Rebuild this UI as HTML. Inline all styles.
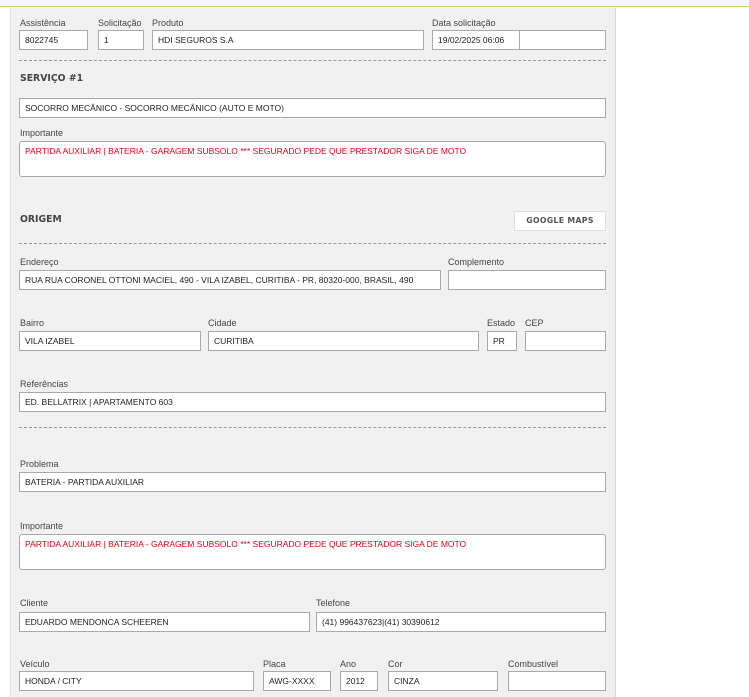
<!DOCTYPE html>
<html><head><meta charset="utf-8"><style>
*{margin:0;padding:0;box-sizing:border-box}
body{width:749px;height:697px;background:#fff;position:relative;overflow:hidden;font-family:"Liberation Sans",sans-serif;font-size:8.5px;color:#333}
.top{position:absolute;left:0;top:0;width:749px;height:7px;background:#f7f7f7;border-bottom:1px solid #c5d36a}
.panel{position:absolute;left:10px;top:8px;width:606px;height:689px;background:#f1f1f1;border-left:1px solid #e2e2e2;border-right:1px solid #d6d6d6}
.l{position:absolute;color:#444;line-height:11px;margin-top:2px;font-size:9px}
.i{position:absolute;height:20px;background:#fff;border:1px solid #a9a9a9;padding-left:5px;line-height:18px;color:#222;white-space:nowrap;overflow:hidden}
.t{position:absolute;background:#fff;border:1px solid #a9a9a9;border-radius:3px;padding:3px 5px;color:#e0001a;line-height:12px}
.d{position:absolute;left:19px;width:587px;border-top:1px dashed #999}
.h{position:absolute;font-family:"DejaVu Sans",sans-serif;font-weight:bold;font-size:9.3px;color:#444}
.btn{position:absolute;left:514px;top:211px;width:92px;height:20px;background:#fff;border:1px solid #e0e0e0;font-family:"DejaVu Sans",sans-serif;font-weight:bold;font-size:7.8px;color:#555;text-align:center;line-height:18px;letter-spacing:.3px}
</style></head><body>
<div class="top"></div>
<div class="panel"></div>

<div class="l" style="left:20px;top:16px">Assistência</div>
<div class="l" style="left:98px;top:16px">Solicitação</div>
<div class="l" style="left:152px;top:16px">Produto</div>
<div class="l" style="left:432px;top:16px">Data solicitação</div>
<div class="i" style="left:19px;top:30px;width:69px">8022745</div>
<div class="i" style="left:98px;top:30px;width:46px">1</div>
<div class="i" style="left:152px;top:30px;width:272px">HDI SEGUROS S.A</div>
<div class="i" style="left:432px;top:30px;width:88px">19/02/2025 06:06</div>
<div class="i" style="left:519px;top:30px;width:87px"></div>
<div class="d" style="top:60px"></div>

<div class="h" style="left:20px;top:73px">SERVIÇO #1</div>
<div class="i" style="left:19px;top:98px;width:587px">SOCORRO MECÂNICO - SOCORRO MECÂNICO (AUTO E MOTO)</div>
<div class="l" style="left:20px;top:126px">Importante</div>
<div class="t" style="left:19px;top:141px;width:587px;height:36px">PARTIDA AUXILIAR | BATERIA - GARAGEM SUBSOLO *** SEGURADO PEDE QUE PRESTADOR SIGA DE MOTO</div>

<div class="h" style="left:20px;top:214px">ORIGEM</div>
<div class="btn">GOOGLE MAPS</div>
<div class="d" style="top:243px"></div>

<div class="l" style="left:20px;top:255px">Endereço</div>
<div class="l" style="left:448px;top:255px">Complemento</div>
<div class="i" style="left:19px;top:270px;width:422px">RUA RUA CORONEL OTTONI MACIEL, 490 - VILA IZABEL, CURITIBA - PR, 80320-000, BRASIL, 490</div>
<div class="i" style="left:448px;top:270px;width:158px"></div>

<div class="l" style="left:20px;top:316px">Bairro</div>
<div class="l" style="left:208px;top:316px">Cidade</div>
<div class="l" style="left:487px;top:316px">Estado</div>
<div class="l" style="left:525px;top:316px">CEP</div>
<div class="i" style="left:19px;top:331px;width:182px">VILA IZABEL</div>
<div class="i" style="left:208px;top:331px;width:271px">CURITIBA</div>
<div class="i" style="left:487px;top:331px;width:30px">PR</div>
<div class="i" style="left:525px;top:331px;width:81px"></div>

<div class="l" style="left:20px;top:377px">Referências</div>
<div class="i" style="left:19px;top:392px;width:587px">ED. BELLATRIX | APARTAMENTO 603</div>
<div class="d" style="top:427px"></div>

<div class="l" style="left:20px;top:457px">Problema</div>
<div class="i" style="left:19px;top:472px;width:587px">BATERIA - PARTIDA AUXILIAR</div>
<div class="l" style="left:20px;top:519px">Importante</div>
<div class="t" style="left:19px;top:534px;width:587px;height:36px">PARTIDA AUXILIAR | BATERIA - GARAGEM SUBSOLO *** SEGURADO PEDE QUE PRESTADOR SIGA DE MOTO</div>

<div class="l" style="left:20px;top:596px">Cliente</div>
<div class="l" style="left:316px;top:596px">Telefone</div>
<div class="i" style="left:19px;top:612px;width:291px">EDUARDO MENDONCA SCHEEREN</div>
<div class="i" style="left:316px;top:612px;width:290px">(41) 996437623|(41) 30390612</div>

<div class="l" style="left:20px;top:657px">Veículo</div>
<div class="l" style="left:263px;top:657px">Placa</div>
<div class="l" style="left:340px;top:657px">Ano</div>
<div class="l" style="left:388px;top:657px">Cor</div>
<div class="l" style="left:508px;top:657px">Combustível</div>
<div class="i" style="left:19px;top:671px;width:235px">HONDA / CITY</div>
<div class="i" style="left:263px;top:671px;width:68px">AWG-XXXX</div>
<div class="i" style="left:340px;top:671px;width:38px">2012</div>
<div class="i" style="left:388px;top:671px;width:110px">CINZA</div>
<div class="i" style="left:508px;top:671px;width:98px"></div>
</body></html>
